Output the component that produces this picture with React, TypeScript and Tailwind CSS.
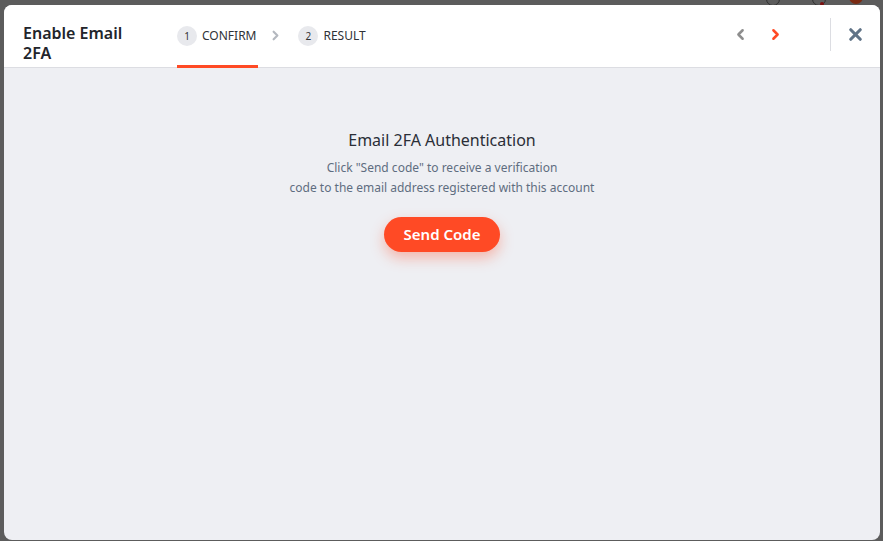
import { X, ChevronLeft, ChevronRight } from "lucide-react";

const Step = ({ n, label }: { n: number; label: string }) => (
    <div className="flex items-center gap-[5px]">
        <div className="w-[20px] h-[20px] rounded-full bg-[#e8e9ed] flex items-center justify-center text-[10px] text-[#333]">
            {n}
        </div>
        <span className="text-[12px] text-[#2f3237]">{label}</span>
    </div>
);

export default function App() {
    return (
        <div
            className="relative h-[541px] w-full bg-[#5c5c5c] overflow-hidden pt-[5px] pl-[4px] pr-[3px] pb-[1px] flex"
            style={{ fontFamily: '"Noto Sans", "Open Sans", sans-serif' }}
        >
            {/* dimmed page behind the modal */}
            <div className="absolute top-[-8px] left-[766px] w-[14px] h-[14px] rounded-full border border-[#2f2f2f]" />
            <div className="absolute top-[-8px] left-[812px] w-[14px] h-[14px] rounded-full border border-[#2f2f2f]" />
            <div className="absolute top-[2px] left-[820px] w-[4px] h-[4px] rounded-full bg-[#7a1010]" />
            <div className="absolute top-[-10px] left-[849px] w-[14px] h-[14px] rounded-full bg-[#7a2a12]" />

            <div className="relative flex-1 flex flex-col rounded-[8px] overflow-hidden bg-[#eeeff3]">
                <div className="h-[63px] bg-white border-b border-[#dcdde2] flex items-stretch">
                    <div className="w-[154px] pl-[19px] pt-[13px] flex items-center">
                        <h1 className="text-[16px] font-semibold leading-[20px] text-[#22252b] w-[110px]">
                            Enable Email 2FA
                        </h1>
                    </div>
                    <div className="flex items-stretch gap-[12px] pl-[19px]">
                        <div className="relative flex items-center">
                            <Step n={1} label="CONFIRM" />
                            <div className="absolute left-0 right-[-2px] bottom-[-1px] h-[3px] bg-[#ff4a25]" />
                        </div>
                        <div className="flex items-center pb-[2px]">
                            <ChevronRight className="w-[15px] h-[15px] text-[#b4b8bf]" strokeWidth={3.5} />
                        </div>
                        <div className="flex items-center pl-[3px]">
                            <Step n={2} label="RESULT" />
                        </div>
                    </div>
                    <div className="flex-1" />
                    <div className="flex items-center gap-[18px] pb-[3px] pr-[46px]">
                        <ChevronLeft className="w-[17px] h-[17px] text-[#8e8e8e]" strokeWidth={3.5} />
                        <ChevronRight className="w-[17px] h-[17px] text-[#ff4a25]" strokeWidth={3.5} />
                    </div>
                    <div className="flex items-center pb-[3px]">
                        <div className="w-px h-[33px] bg-[#dcdde2]" />
                    </div>
                    <div className="w-[49px] flex items-center justify-center pb-[3px]">
                        <X className="w-[19px] h-[19px] text-[#607387]" strokeWidth={4} />
                    </div>
                </div>

                <div className="flex-1 flex flex-col items-center pt-[62px]">
                    <h2 className="text-[16px] leading-[20px] text-[#2a2e37]">Email 2FA Authentication</h2>
                    <p className="mt-[8px] text-[12px] leading-[20px] text-[#5e6d80] text-center">
                        Click "Send code" to receive a verification
                        <br />
                        code to the email address registered with this account
                    </p>
                    <button className="mt-[19px] h-[35px] px-[20px] rounded-full bg-[#ff4a25] text-white text-[15px] font-semibold shadow-[0_6px_14px_rgba(255,74,37,0.35)]">
                        Send Code
                    </button>
                </div>
            </div>
        </div>
    );
}
